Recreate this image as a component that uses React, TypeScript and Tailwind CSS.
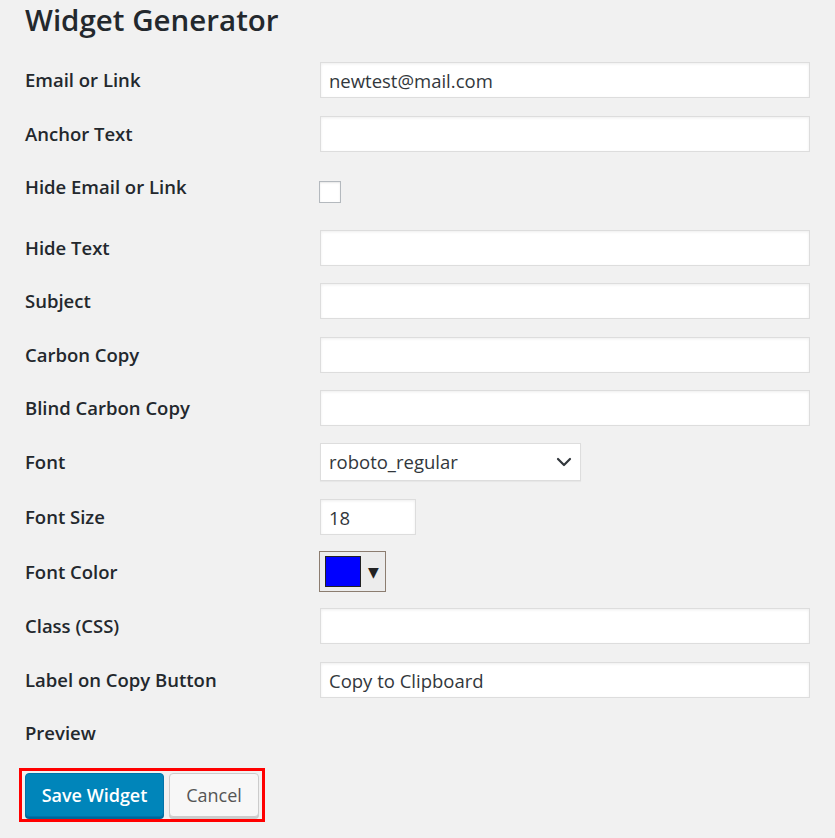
const font = { fontFamily: '"Open Sans", "Noto Sans", sans-serif' };

const Label = ({ children }: { children: React.ReactNode }) => (
  <div className="w-[295px] shrink-0 text-[18.5px] leading-[28px] font-semibold text-[#23282d]">{children}</div>
);

const TextInput = ({ value = "", width = "w-[490px]" }: { value?: string; width?: string }) => (
  <input
    type="text"
    defaultValue={value}
    className={`${width} h-[36px] bg-white border-[1.5px] border-[#dddddd] shadow-[inset_0_1px_3px_rgba(0,0,0,0.07)] px-[8px] text-[18.5px] text-[#32373c] outline-none`}
  />
);

const Row = ({ label, children, className = "h-[36px]" }: { label: string; children: React.ReactNode; className?: string }) => (
  <div className={`flex items-center ${className}`}>
    <Label>{label}</Label>
    {children}
  </div>
);

export default function App() {
  return (
    <div className="min-h-screen w-full bg-[#f1f1f1] pl-[25px]" style={font}>
      <h1 className="text-[29.5px] leading-[40px] font-semibold text-[#23282d]">Widget Generator</h1>

      <div className="flex flex-col mt-[22px]">
        <Row label="Email or Link">
          <TextInput value="newtest@mail.com" />
        </Row>
        <Row label="Anchor Text" className="h-[36px] mt-[18px]">
          <TextInput />
        </Row>
        <div className="flex items-start h-[43px] mt-[17px]">
          <div className="pt-[4px]">
            <Label>Hide Email or Link</Label>
          </div>
          <div className="mt-[12px] w-[22px] h-[22px] bg-white border-[1.5px] border-[#b4b9be] shadow-[inset_0_1px_2px_rgba(0,0,0,0.1)] -ml-[1px]" />
        </div>
        <Row label="Hide Text" className="h-[36px] mt-[18px]">
          <TextInput />
        </Row>
        <Row label="Subject" className="h-[36px] mt-[17px]">
          <TextInput />
        </Row>
        <Row label="Carbon Copy" className="h-[36px] mt-[18px]">
          <TextInput />
        </Row>
        <Row label="Blind Carbon Copy" className="h-[36px] mt-[17px]">
          <TextInput />
        </Row>
        <Row label="Font" className="h-[38px] mt-[17px]">
          <div className="w-[261px] h-[38px] bg-white border-[1.5px] border-[#dddddd] shadow-[0_1px_1px_rgba(0,0,0,0.04)] flex items-center justify-between pl-[8px] pr-[8px] text-[18.5px] text-[#32373c]">
            <span>roboto_regular</span>
            <svg width="16" height="10" viewBox="0 0 16 10" fill="none">
              <polyline points="2,2 8,8 14,2" stroke="#32373c" strokeWidth="2.2" strokeLinecap="round" strokeLinejoin="round" />
            </svg>
          </div>
        </Row>
        <Row label="Font Size" className="h-[36px] mt-[18px]">
          <TextInput value="18" width="w-[96px]" />
        </Row>
        <Row label="Font Color" className="h-[41px] mt-[16px]">
          <div className="-ml-[1px] w-[67px] h-[41px] border-[1.5px] border-[#8c7d70] bg-[#ececec] flex items-center pl-[5px] gap-[7px]">
            <div className="w-[36px] h-[31px] bg-[#0000ff] border border-[#222]" />
            <span className="text-[14px] text-[#222] leading-none" style={{ fontFamily: '"DejaVu Sans", sans-serif' }}>▼</span>
          </div>
        </Row>
        <Row label="Class (CSS)" className="h-[36px] mt-[16px]">
          <TextInput />
        </Row>
        <Row label="Label on Copy Button" className="h-[36px] mt-[18px]">
          <TextInput value="Copy to Clipboard" />
        </Row>
        <Row label="Preview" className="h-[36px] mt-[17px]">
          <span />
        </Row>

        <div className="mt-[17px] -ml-[6px] w-[246px] h-[54px] border-[3px] border-[#ff0000] flex items-center pl-[3px] gap-[5px]">
          <button className="w-[139px] h-[44px] bg-[#0085ba] border-[1.5px] border-[#0073aa] rounded-[4px] shadow-[0_2px_0_#006799] text-white text-[18px] font-semibold">
            Save Widget
          </button>
          <button className="w-[90px] h-[44px] bg-[#f7f7f7] border-[1.5px] border-[#cccccc] rounded-[4px] shadow-[0_2px_0_#cccccc] text-[#555] text-[18px]">
            Cancel
          </button>
        </div>
      </div>
    </div>
  );
}
